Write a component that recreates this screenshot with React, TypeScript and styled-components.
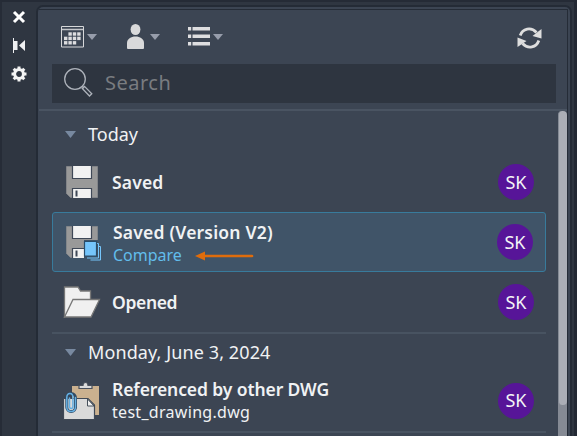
import React from 'react';
import styled, { createGlobalStyle } from 'styled-components';

const Global = createGlobalStyle`
  * { box-sizing: border-box; }
  html, body { margin: 0; overflow: hidden; background: #242a35; }
  body { font-family: "Noto Sans", "Open Sans", sans-serif; color: #f3f4f6; }
  svg { display: block; flex: none; overflow: visible; }
`;

const Palette = styled.div`
  width: 577px;
  height: 436px;
  display: flex;
  background: #2f3641;
  border-left: 2px solid #262c37;
  border-right: 3px solid #232934;
  border-top: 2px solid #252b36;
  overflow: hidden;
`;

const TitleStrip = styled.div`
  width: 34px;
  flex: none;
  display: flex;
  flex-direction: column;
  align-items: center;
  gap: 13px;
  padding-top: 7px;
`;

const StripButton = styled.button`
  width: 16px;
  height: 16px;
  padding: 0;
  border: 0;
  background: none;
`;

const Frame = styled.div`
  width: 536px;
  height: 440px;
  flex: none;
  margin-top: 3px;
  border: 2px solid #242b36;
  border-radius: 7px 7px 0 0;
  background: #3c4553;
  padding: 2px 2px 0 1px;
`;

const Content = styled.div`
  height: 430px;
  display: flex;
  flex-direction: column;
  border-top: 1px solid #252c37;
  border-right: 1px solid #252c37;
`;

const Toolbar = styled.div`
  height: 54px;
  flex: none;
  display: flex;
  align-items: center;
  padding: 0 25px 1px 22px;
`;

const ToolButton = styled.button<{ $after?: number; $gap?: number }>`
  display: flex;
  align-items: center;
  gap: ${p => p.$gap ?? 3}px;
  padding: 0;
  border: 0;
  background: none;
  margin-right: ${p => p.$after ?? 0}px;
`;

const RefreshButton = styled(ToolButton)`
  margin-left: auto;
  padding-top: 2px;
`;

const SearchBox = styled.div`
  width: 504px;
  height: 39px;
  flex: none;
  margin-left: 13px;
  display: flex;
  align-items: center;
  gap: 12px;
  padding: 0 0 2px 12px;
  background: #2e3540;
  color: #797c80;
  font-size: 20px;
  letter-spacing: 0.5px;
`;

const Body = styled.div`
  margin-top: 6px;
  flex: 1;
  min-height: 0;
  display: flex;
  justify-content: space-between;
  border-top: 2px solid #4a5462;
`;

const List = styled.div`
  width: 494px;
  margin-left: 13px;
`;

const Group = styled.section`
  border-bottom: 2px solid #485361;
`;

const GroupHeader = styled.div<{ $height: number; $top?: number }>`
  height: ${p => p.$height}px;
  display: flex;
  align-items: center;
  gap: 12px;
  padding: ${p => p.$top ?? 0}px 0 0 13px;
`;

const Row = styled.div<{ $selected?: boolean; $height?: number }>`
  height: ${p => p.$height ?? 60}px;
  display: flex;
  align-items: center;
  padding: 0 ${p => (p.$selected ? 12 : 11)}px 0 13px;
  border: 1px solid ${p => (p.$selected ? '#387b9c' : 'transparent')};
  border-radius: 3px;
  background: ${p => (p.$selected ? '#405468' : 'transparent')};
`;

const RowText = styled.div<{ $top?: number; $left?: number }>`
  flex: 1;
  padding: ${p => p.$top ?? 0}px 0 0 ${p => p.$left ?? 10}px;
`;

const Line = styled.div<{ $size?: number; $weight?: number; $color?: string; $spacing?: number }>`
  display: flex;
  align-items: center;
  white-space: pre;
  font-size: ${p => p.$size ?? 17.5}px;
  font-weight: ${p => p.$weight ?? 400};
  line-height: 23px;
  letter-spacing: ${p => p.$spacing ?? 0}px;
  color: ${p => p.$color ?? '#f0f2f4'};
`;

const Avatar = styled.div`
  width: 36px;
  height: 36px;
  flex: none;
  border-radius: 50%;
  background: #571598;
  display: flex;
  align-items: center;
  justify-content: center;
  padding-bottom: 1px;
  font-size: 18px;
  line-height: 34px;
`;

const ScrollTrack = styled.div`
  width: 9px;
  height: 330px;
  background: linear-gradient(#3c4553 0 20px, #858a94 20px);
`;

const ScrollThumb = styled.div`
  height: 294px;
  border-radius: 4px;
  border-left: 1px solid #858b95;
  background: #abaeb6;
`;

const Caret = ({ color = '#979dab', w = 10, h = 6 }: { color?: string; w?: number; h?: number }) => (
  <svg width={w} height={h} viewBox="0 0 10 6" preserveAspectRatio="none"><path d="M0 0h10L5 6z" fill={color} /></svg>
);

const CalendarIcon = () => (
  <svg width="23" height="22" viewBox="0 0 23 22">
    <path d="M.5.5h22v20.500h-22z" fill="none" stroke="#d6d7d9" />
    <path d="M1 3.500h21" stroke="#c4c6ca" strokeWidth="1.500" />
    {[0, 1, 2].map(y => [0, 1, 2, 3].map(x =>
      (x === 0 && y === 0) || (x === 3 && y === 2) ? null :
        <rect key={`${x}-${y}`} x={3 + x * 4.400} y={6.300 + y * 4.400} width="3.400" height="3.400" fill="#dddddf" />
    ))}
  </svg>
);

const PersonIcon = () => (
  <svg width="17" height="25" viewBox="0 0 17 25" fill="#d9d9da">
    <ellipse cx="8.500" cy="5.500" rx="4.900" ry="5.500" />
    <path d="M0 24V19c0-4 4-6.500 8.500-6.500S17 15 17 19v5q0 1-1 1H1q-1 0-1-1z" />
  </svg>
);

const ListIcon = () => (
  <svg width="22" height="19" viewBox="0 0 22 19" fill="#dedee0">
    {[0, 7.5, 15].map(y => (
      <g key={y}><rect y={y} width="3.200" height="3.500" /><rect x="4.500" y={y} width="17.500" height="3.500" /></g>
    ))}
  </svg>
);

const RefreshIcon = () => (
  <svg width="25" height="22" viewBox="0 0 25 22">
    <g fill="none" stroke="#dedede" strokeWidth="2.800">
      <path d="M3.200 8.500C5.500 1.500 14 -.5 19.500 5.500" />
      <path d="M21.800 13.500C19.500 20.500 11 22.500 5.500 16.500" />
    </g>
    <path d="M24.500 2v9.500L15.500 9zM.5 20v-9.500L9.500 14z" fill="#dedede" />
  </svg>
);

const SearchIcon = () => (
  <svg width="29" height="29" viewBox="0 0 29 29" fill="none" stroke="#adb2ba" strokeWidth="1.300">
    <circle cx="11" cy="11" r="10.300" />
    <path d="M18.300 18.300l1.800 1.800M18.300 20.500l2.200-2.200 7.300 7.400-2.300 2.300z" />
  </svg>
);

const FloppyIcon = ({ versions = false }: { versions?: boolean }) => (
  <svg width="36" height="32" viewBox="0 0 36 32">
    <path d="M.5.5h31v31H4.500L.5 27.500z" fill="#999999" stroke="#888a8d" strokeWidth=".8" />
    <path d="M6.500 0v12.500h19V0zM6.500 32V22.500h19V32z" fill="#f2f2f2" />
    <path d="M6.500 0v12.500h19V0M6.500 32V22.500h19V32" fill="none" stroke="#3f4857" strokeWidth="1.200" />
    <path d="M10.500 24.500v6" stroke="#3f4857" strokeWidth="2" />
    {versions && (
      <g fill="none" stroke="#75c5fb">
        <path d="M18 14h14v4h2v16H24v-2h-6z" fill="#405468" stroke="none" />
        <path d="M31 17.500h1.500V32H21M33 20.500h1.500V34H24.500" />
        <path d="M18.500 15.500h12v14.500h-12z" fill="#75c5fb" stroke="#294c69" strokeWidth="1.200" />
      </g>
    )}
  </svg>
);

const FolderIcon = () => (
  <svg width="36" height="32" viewBox="0 0 36 32" fill="#f0f0f0" stroke="#777" strokeWidth="1.300">
    <path d="M-1.500 31V1H12l2.500 4h10v9z" />
    <path d="M-1.500 31L7 13.500h26.500L25 31z" />
  </svg>
);

const ReferenceIcon = () => (
  <svg width="36" height="36" viewBox="0 0 36 36">
    <path d="M6 3h27v29H6z" fill="#cbb18f" />
    <path d="M13 5.500V2.500h4q0-3 2.500-3T22 2.500h4v3z" fill="#dadada" stroke="#49505c" strokeWidth="1.200" />
    <path d="M-2.500 15.500H22L28.500 22v14.500h-31z" fill="#dadada" stroke="#404956" strokeWidth="1.200" />
    <path d="M21.500 16v7H28z" fill="#f1f1f1" stroke="#46505b" />
    <g fill="none" strokeLinecap="round">
      <rect x=".8" y="10.500" width="8.700" height="18" rx="4.300" stroke="#304b65" strokeWidth="3" />
      <path d="M3.500 15v8.500q0 2 1.700 2t1.700-2V14.500q0-4-3-4T.8 14.500v9.500q0 4.500 4.300 4.500T9.500 24V14.500" stroke="#66afe1" strokeWidth="1.500" />
    </g>
  </svg>
);

const Arrow = styled.svg`
  margin-left: 13px;
`;

export default function App() {
  return (
    <>
      <Global />
      <Palette>
        <TitleStrip>
          <StripButton>
            <svg width="16" height="16" viewBox="0 0 16 16" stroke="#fff" strokeWidth="3"><path d="M3 3l10 10M13 3L3 13" /></svg>
          </StripButton>
          <StripButton>
            <svg width="16" height="16" viewBox="0 0 16 16" fill="#eff0f2"><path d="M2 0h1v15H2zM3 3h3.500v9H3zM14 2v11L8 7.500z" /></svg>
          </StripButton>
          <StripButton>
            <svg width="16" height="16" viewBox="0 1 16 16" fill="none" stroke="#f4f4f4">
              <circle cx="8" cy="8" r="4.400" strokeWidth="3" />
              <g strokeWidth="3">
                {[0, 45, 90, 135, 180, 225, 270, 315].map(a => <path key={a} d="M8 .5v3" transform={`rotate(${a} 8 8)`} />)}
              </g>
            </svg>
          </StripButton>
        </TitleStrip>
        <Frame>
          <Content>
            <Toolbar>
              <ToolButton $after={30}><CalendarIcon /><Caret /></ToolButton>
              <ToolButton $after={28} $gap={6}><PersonIcon /><Caret /></ToolButton>
              <ToolButton><ListIcon /><Caret /></ToolButton>
              <RefreshButton><RefreshIcon /></RefreshButton>
            </Toolbar>
            <SearchBox><SearchIcon />Search</SearchBox>
            <Body>
              <List>
                <Group>
                  <GroupHeader $height={41} $top={5}>
                    <Caret color="#7889a0" w={11} h={7} />
                    <Line $size={18}>Today</Line>
                  </GroupHeader>
                  <Row>
                    <FloppyIcon />
                    <RowText><Line $weight={600} $spacing={0.15}>Saved</Line></RowText>
                    <Avatar>SK</Avatar>
                  </Row>
                  <Row $selected>
                    <FloppyIcon versions />
                    <RowText $top={4} $left={11}>
                      <Line $weight={600} $spacing={0.2}>Saved (Version V2)</Line>
                      <Line $size={16} $color="#62bdec">
                        Compare
                        <Arrow width="58" height="10" viewBox="0 0 58 10"><path d="M9 5h48" stroke="#df6c0b" strokeWidth="2.700" strokeLinecap="round" /><path d="M0 5l10-4.500v9z" fill="#df6c0b" /></Arrow>
                      </Line>
                    </RowText>
                    <Avatar>SK</Avatar>
                  </Row>
                  <Row>
                    <FolderIcon />
                    <RowText><Line $weight={600} $spacing={-0.35}>Opened</Line></RowText>
                    <Avatar>SK</Avatar>
                  </Row>
                </Group>
                <Group>
                  <GroupHeader $height={36}>
                    <Caret color="#7889a0" w={11} h={7} />
                    <Line $size={18} $spacing={0.1}>Monday, June 3, 2024</Line>
                  </GroupHeader>
                  <Row $height={61}>
                    <ReferenceIcon />
                    <RowText $top={1}>
                      <Line $weight={600} $spacing={-0.1}>Referenced by other DWG</Line>
                      <Line $size={16} $spacing={0.3}>test_drawing.dwg</Line>
                    </RowText>
                    <Avatar>SK</Avatar>
                  </Row>
                </Group>
              </List>
              <ScrollTrack><ScrollThumb /></ScrollTrack>
            </Body>
          </Content>
        </Frame>
      </Palette>
    </>
  );
}
